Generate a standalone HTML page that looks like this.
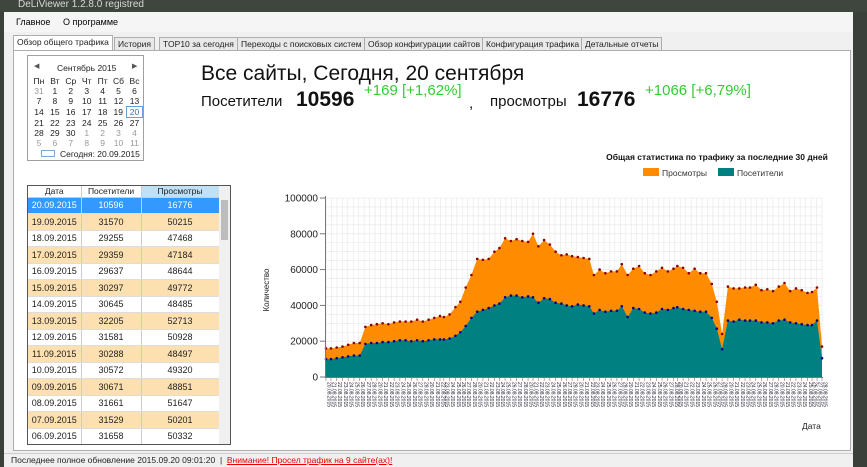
<!DOCTYPE html>
<html><head><meta charset="utf-8">
<style>
*{margin:0;padding:0;box-sizing:border-box}
body{width:867px;height:467px;overflow:hidden;background:#3b403a;font-family:"Liberation Sans",sans-serif;position:relative}
.abs{position:absolute}
#title{left:0;top:0;width:867px;height:12px;background:#3f463e;color:#d8d8d8;font-size:10px;line-height:9px;padding-left:18px}
#win{left:4px;top:12px;width:849px;height:455px;background:#f0f0f0}
#menu{left:4px;top:12px;width:849px;height:20px;background:#f5f5f5;font-size:9px;}
.tab{position:absolute;top:37px;height:14px;font-size:8.5px;line-height:12px;border:1px solid #adadad;background:#e9e9e9;padding:0 3px;color:#222;white-space:nowrap}
#panel{left:13px;top:50px;width:838px;height:401px;background:#fff;border:1px solid #adadad}
#cal{left:27px;top:55px;width:117px;height:106px;border:1px solid #a0a0a0;background:#fff;font-size:8.5px;color:#222}
#cal table{border-collapse:collapse;position:absolute;left:3px;top:20px}
#cal td{width:16px;height:10px;text-align:center;line-height:10px;padding:0}
.g{color:#999}
#grid{left:27px;top:185px;width:204px;height:260px;border:1px solid #555;background:#fff;overflow:hidden}
#grid table{border-collapse:collapse;font-size:9px;color:#222}
#grid td{height:16.5px;border-right:1px solid #ccc;border-bottom:1px solid #ddd;text-align:center;padding:0}
#grid tr.h td{height:11px;font-size:8.5px;border-bottom:1px solid #ccc}
tr.o td{background:#fde0b0}
tr.s td{background:#3399ff;color:#fff}
#status{left:4px;top:453px;width:849px;height:14px;background:#f0f0f0;font-size:8.5px;line-height:13px;padding-left:7px;color:#222;border-top:1px solid #ccc}
</style></head><body>
<div id="title" class="abs">DeLiViewer 1.2.8.0 registred</div>
<div id="win" class="abs"></div>
<div id="menu" class="abs"><span class="abs" style="left:12px;top:5px">Главное</span><span class="abs" style="left:59px;top:5px">О программе</span></div>
<div class="tab" style="left:13px;top:35px;height:16px;background:#fff;border-bottom:none">Обзор общего трафика</div>
<div class="tab" style="left:114px">История</div>
<div class="tab" style="left:159px">TOP10 за сегодня</div>
<div class="tab" style="left:237px">Переходы с поисковых систем</div>
<div class="tab" style="left:364px">Обзор конфигурации сайтов</div>
<div class="tab" style="left:482px">Конфигурация трафика</div>
<div class="tab" style="left:581px">Детальные отчеты</div>
<div id="panel" class="abs"></div>

<div id="cal" class="abs">
<span class="abs" style="left:6px;top:6px;font-size:7px;color:#555">◀</span>
<span class="abs" style="left:29px;top:7px">Сентябрь 2015</span>
<span class="abs" style="left:104px;top:6px;font-size:7px;color:#555">▶</span>
<table>
<tr><td>Пн</td><td>Вт</td><td>Ср</td><td>Чт</td><td>Пт</td><td>Сб</td><td>Вс</td></tr>
<tr><td class="g">31</td><td>1</td><td>2</td><td>3</td><td>4</td><td>5</td><td>6</td></tr>
<tr><td>7</td><td>8</td><td>9</td><td>10</td><td>11</td><td>12</td><td>13</td></tr>
<tr><td>14</td><td>15</td><td>16</td><td>17</td><td>18</td><td>19</td><td style="border:1px solid #6aa0d8;color:#3a70b0">20</td></tr>
<tr><td>21</td><td>22</td><td>23</td><td>24</td><td>25</td><td>26</td><td>27</td></tr>
<tr><td>28</td><td>29</td><td>30</td><td class="g">1</td><td class="g">2</td><td class="g">3</td><td class="g">4</td></tr>
<tr><td class="g">5</td><td class="g">6</td><td class="g">7</td><td class="g">8</td><td class="g">9</td><td class="g">10</td><td class="g">11</td></tr>
</table>
<span class="abs" style="left:13px;top:94px;width:14px;height:7px;border:1px solid #7aa7d8"></span>
<span class="abs" style="left:32px;top:93px">Сегодня: 20.09.2015</span>
</div>

<div class="abs" style="left:201px;top:62px;font-size:21px;color:#111">Все сайты, Сегодня, 20 сентября</div>
<div class="abs" style="left:201px;top:93px;font-size:15px;color:#111">Посетители</div>
<div class="abs" style="left:296px;top:88px;font-size:21px;color:#111;font-weight:bold">10596</div>
<div class="abs" style="left:364px;top:82px;font-size:15px;color:#33cc33">+169 [+1,62%]</div>
<div class="abs" style="left:469px;top:95px;font-size:15px;color:#111">,</div>
<div class="abs" style="left:490px;top:93px;font-size:15px;color:#111">просмотры</div>
<div class="abs" style="left:577px;top:88px;font-size:21px;color:#111;font-weight:bold">16776</div>
<div class="abs" style="left:645px;top:82px;font-size:15px;color:#33cc33">+1066 [+6,79%]</div>

<div id="grid" class="abs">
<table>
<tr class="h"><td style="width:53px">Дата</td><td style="width:60px">Посетители</td><td style="width:78px;background:#bfe0f5">Просмотры</td></tr>
<tr class="s"><td>20.09.2015</td><td>10596</td><td>16776</td></tr>
<tr class="o"><td>19.09.2015</td><td>31570</td><td>50215</td></tr>
<tr><td>18.09.2015</td><td>29255</td><td>47468</td></tr>
<tr class="o"><td>17.09.2015</td><td>29359</td><td>47184</td></tr>
<tr><td>16.09.2015</td><td>29637</td><td>48644</td></tr>
<tr class="o"><td>15.09.2015</td><td>30297</td><td>49772</td></tr>
<tr><td>14.09.2015</td><td>30645</td><td>48485</td></tr>
<tr class="o"><td>13.09.2015</td><td>32205</td><td>52713</td></tr>
<tr><td>12.09.2015</td><td>31581</td><td>50928</td></tr>
<tr class="o"><td>11.09.2015</td><td>30288</td><td>48497</td></tr>
<tr><td>10.09.2015</td><td>30572</td><td>49320</td></tr>
<tr class="o"><td>09.09.2015</td><td>30671</td><td>48851</td></tr>
<tr><td>08.09.2015</td><td>31661</td><td>51647</td></tr>
<tr class="o"><td>07.09.2015</td><td>31529</td><td>50201</td></tr>
<tr><td>06.09.2015</td><td>31658</td><td>50332</td></tr>
</table>
<div class="abs" style="left:191px;top:0;width:12px;height:258px;background:#f0f0f0"></div>
<div class="abs" style="left:193px;top:14px;width:7px;height:40px;background:#bcbcbc"></div>
</div>

<svg class="abs" style="left:0;top:0" width="867" height="467" id="ch">
<text x="717" y="160" font-size="8.5" font-weight="bold" text-anchor="middle" font-family="Liberation Sans" fill="#111">Общая статистика по трафику за последние 30 дней</text>
<rect x="643" y="168" width="16" height="8" fill="#ff8c00"/><text x="662" y="176" font-size="8.5" fill="#333" font-family="Liberation Sans">Просмотры</text>
<rect x="718" y="168" width="16" height="8" fill="#008080"/><text x="737" y="176" font-size="8.5" fill="#333" font-family="Liberation Sans">Посетители</text>
<text x="269" y="290" font-size="8" fill="#222" transform="rotate(-90 269 290)" text-anchor="middle" font-family="Liberation Sans">Количество</text>
<text x="802" y="429" font-size="8.5" fill="#222" font-family="Liberation Sans">Дата</text>
<g id="dyn"></g>
</svg>

<div id="status" class="abs">Последнее полное обновление 2015.09.20 09:01:20 &nbsp;| &nbsp;<span style="color:#e00;text-decoration:underline">Внимание! Просел трафик на 9 сайте(ах)!</span></div>

<script>
var zx=[197,210,225,240,255,270,285,300,315,330,345,360,375,390,405,420,435,450,465,480,495,505,520,535,548,562,577,592,607,622,637,650,665,680,695,710,725,738,752,767,782,797,812,826,840,855,870,885,897,912,927,942,957,970,985,1000,1015,1030,1045,1060,1075,1090,1105,1115,1130,1145,1160,1175,1190,1205,1218,1232,1247,1262,1277,1292,1305,1320,1335,1350,1365,1380,1395,1410,1425,1440,1455,1467,1480,1493];
var v=[16,16,16.5,17,18,19,19,28,29,29.5,30,29.5,30.5,31,31,31,32,31,32,33,34,33.5,35,39,42,50,57,66,65.5,66,70,72,77.5,76,77,76,75.5,80,73,76.5,74,70,68,68.5,67.5,67,66.5,66,57,60,58,59,59,63,57,60.5,62,58,57,59,61,59,60.5,62,61,58,60.5,58,58,52,42,24,50.5,49.5,49.5,50,50,51.5,48.5,49,48,50.5,52.5,48,49.5,48.5,47,47.5,50,17];
var p=[10,10,10.5,11,11.5,12,12,18.5,19,19,19.5,19.5,20,20.5,20.5,20,20.5,20,20.5,21,21,21,21.5,23,25,28.5,33,36.5,37.5,38.5,40,41,44.5,45.5,45.5,44.5,45,44.5,41.5,44,43.5,41.5,41,40,39.5,40.5,40,39.5,35.5,37.5,36.5,37,37,39.5,33.5,38.5,38,36,35.5,36,38,37.5,38.5,39,38,37.5,37,36.5,36.5,33,27,15.5,31.5,31,32,31.5,31.5,31.5,30.5,30.5,30,31.5,32,30.5,30,29.5,29,29,31.5,10.5];
var X=function(z){return 326+(z-197)*(822-326)/(1493-197)};
var Y=function(k){return 377-k*1.79};
var s='';
for(var gx=326;gx<=822;gx+=5.45){s+='<line x1="'+gx+'" y1="198" x2="'+gx+'" y2="377" stroke="#e6e6e6" stroke-width="0.6"/>';}
for(var gy=377;gy>=198;gy-=8.95){s+='<line x1="326" y1="'+gy+'" x2="822" y2="'+gy+'" stroke="#e6e6e6" stroke-width="0.6"/>';}
var a='M'+X(zx[0])+' 377',b=a;
for(var i=0;i<zx.length;i++){a+=' L'+X(zx[i]).toFixed(1)+' '+Y(v[i]).toFixed(1);b+=' L'+X(zx[i]).toFixed(1)+' '+Y(p[i]).toFixed(1);}
a+=' L822 377Z';b+=' L822 377Z';
s+='<path d="'+a+'" fill="#ff8c00"/><path d="'+b+'" fill="#008080"/>';
for(i=0;i<zx.length;i++){s+='<circle cx="'+X(zx[i]).toFixed(1)+'" cy="'+Y(v[i]).toFixed(1)+'" r="1.3" fill="#8b0000"/><circle cx="'+X(zx[i]).toFixed(1)+'" cy="'+Y(p[i]).toFixed(1)+'" r="1.3" fill="#00008b"/>';}
s+='<line x1="325.5" y1="196" x2="325.5" y2="378" stroke="#777"/><line x1="325" y1="377.5" x2="823" y2="377.5" stroke="#777"/>';
var lab=['0','20000','40000','60000','80000','100000'];
for(i=0;i<6;i++){var y=377-i*35.8;s+='<line x1="320" y1="'+y+'" x2="326" y2="'+y+'" stroke="#777"/><text x="318" y="'+(y+3.5)+'" font-size="10" text-anchor="end" fill="#222" font-family="Liberation Sans">'+lab[i]+'</text>';}
for(i=0;i<zx.length;i++){var xx=X(zx[i]);s+='<line x1="'+xx+'" y1="377" x2="'+xx+'" y2="381" stroke="#777" stroke-width="0.6"/><text x="'+(xx+1.5)+'" y="382" font-size="5" fill="#223" font-family="Liberation Sans" transform="rotate(90 '+(xx+1.5)+' 382)">2'+(i%9)+'.08.2015</text>';}
document.getElementById('dyn').innerHTML=s;
</script>
</body></html>
